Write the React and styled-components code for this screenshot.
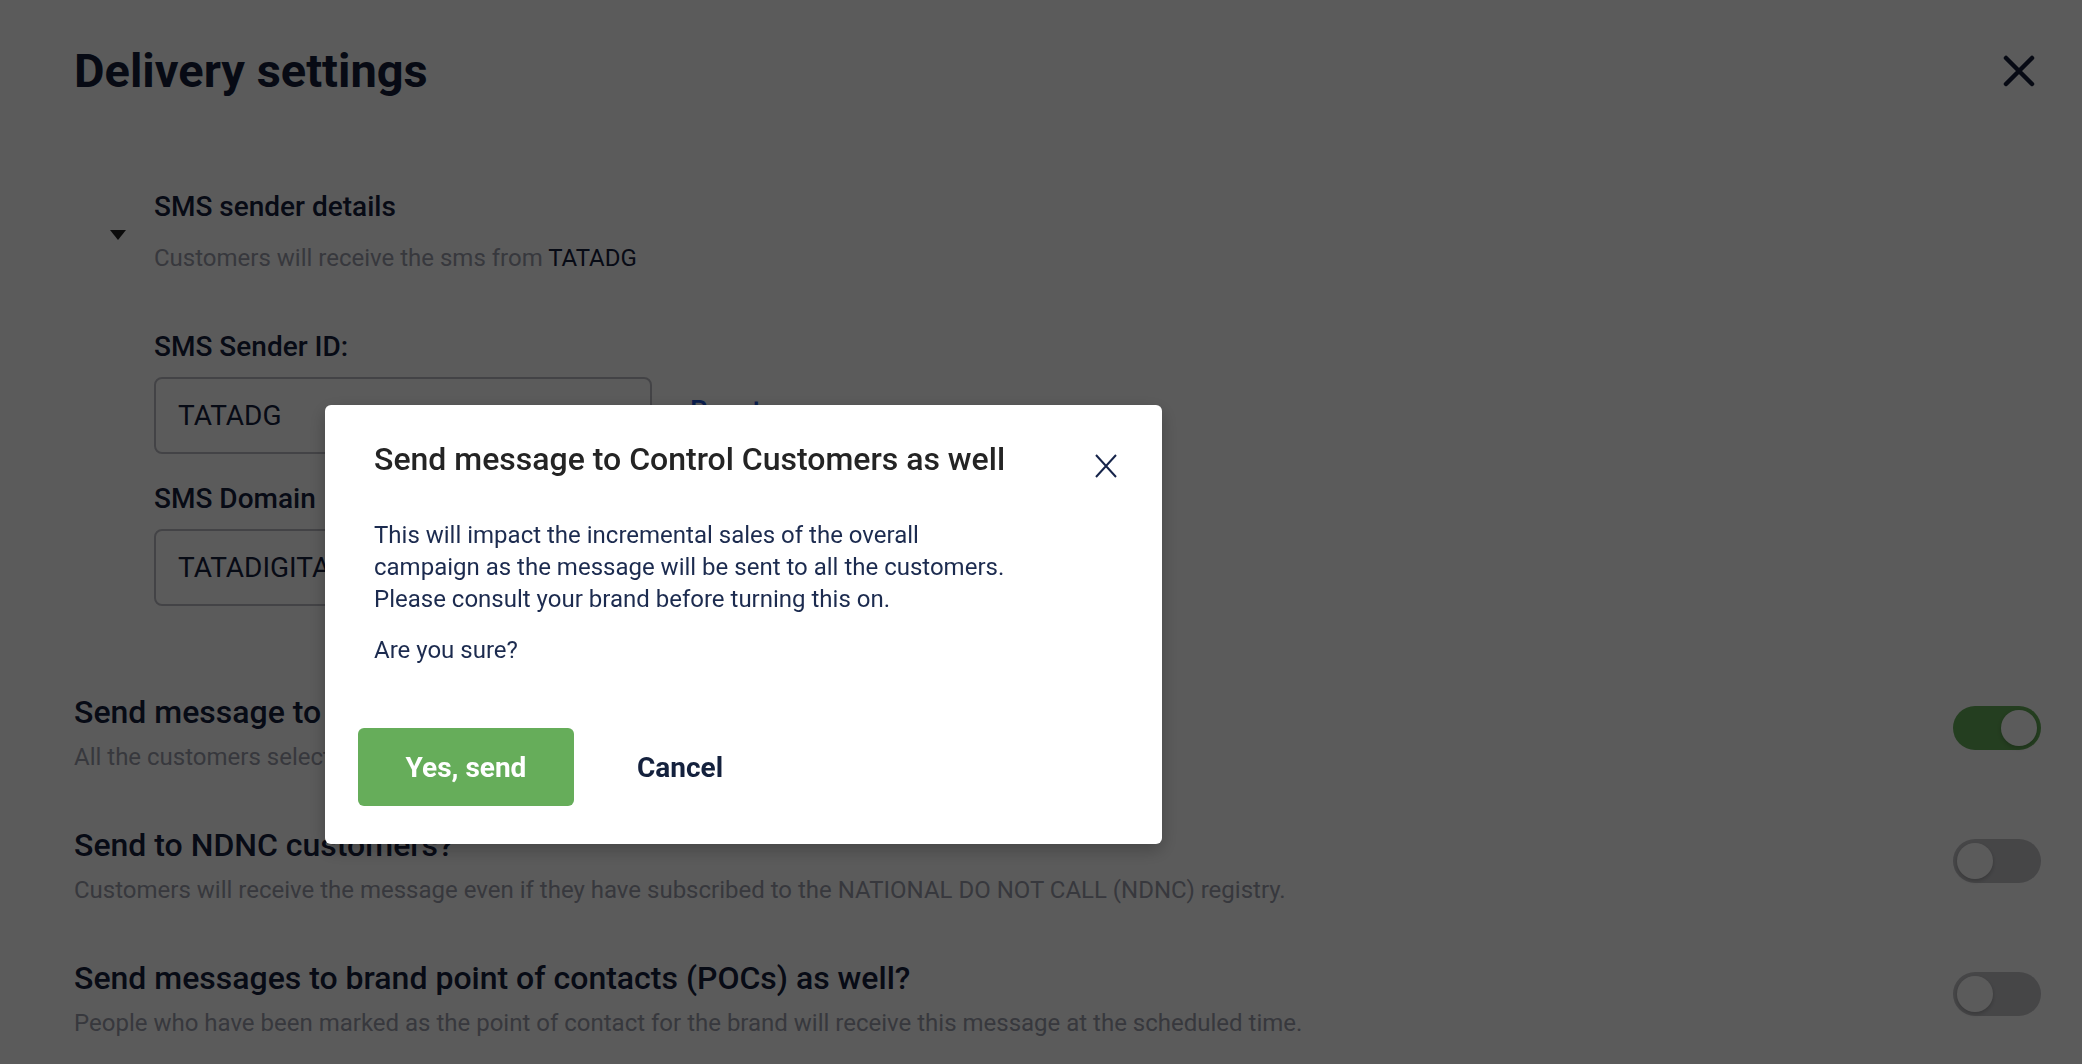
import React from "react";
import styled, { createGlobalStyle } from "styled-components";

const GlobalStyle = createGlobalStyle`
  html, body {
    margin: 0;
    padding: 0;
    background: #ffffff;
    font-family: Roboto, "Liberation Sans", Arial, sans-serif;
  }
  * { box-sizing: border-box; }
`;

const Page = styled.div`
  width: 2082px;
  min-height: 1064px;
  padding: 43px 41px 0 74px;
  background: #fff;
  color: #16203d;
`;

const Header = styled.div`
  display: flex;
  align-items: center;
  justify-content: space-between;
`;

const PageTitle = styled.h1`
  margin: 0;
  font-size: 47px;
  line-height: 56px;
  font-weight: 700;
  color: #141d38;
`;

const CloseButton = styled.button`
  width: 32px;
  height: 32px;
  margin-right: 6px;
  padding: 0;
  border: none;
  background: none;
  display: flex;
  align-items: center;
  justify-content: center;
  color: #141d38;
`;

const SenderSection = styled.div`
  display: flex;
  align-items: center;
  margin-top: 91px;
`;

const CaretCol = styled.div`
  width: 88px;
  display: flex;
  justify-content: center;
  padding-top: 7px;
  margin-right: -8px;
`;

const Caret = styled.span`
  width: 0;
  height: 0;
  border-left: 8px solid transparent;
  border-right: 8px solid transparent;
  border-top: 10px solid #222;
`;

const SectionTitle = styled.div`
  font-size: 28px;
  line-height: 34px;
  font-weight: 500;
  color: #16203d;
`;

const SubText = styled.div`
  margin-top: ${(p) => p.$gap || 0}px;
  font-size: 24px;
  line-height: 30px;
  color: #9b9dab;

  b {
    font-weight: 400;
    color: #16203d;
  }
`;

const Fields = styled.div`
  padding-left: 80px;
`;

const FieldLabel = styled.div`
  margin-top: ${(p) => p.$gap}px;
  font-size: 28px;
  line-height: 32px;
  font-weight: 500;
  color: #16203d;
`;

const FieldRow = styled.div`
  display: flex;
  align-items: flex-start;
  gap: 38px;
  margin-top: 14px;
`;

const Input = styled.div`
  width: 498px;
  height: 77px;
  border: 2px solid #bcbcc4;
  border-radius: 8px;
  padding-left: 22px;
  display: flex;
  align-items: center;
  font-size: 28px;
  color: #16203d;
`;

const ResetLink = styled.span`
  margin-top: 18px;
  font-size: 28px;
  line-height: 32px;
  font-weight: 500;
  color: #1f56d8;
`;

const Settings = styled.div`
  display: flex;
  flex-direction: column;
  gap: 53px;
  margin-top: 86px;
`;

const SettingRow = styled.div`
  display: flex;
  align-items: center;
  justify-content: space-between;
`;

const SettingTitle = styled.div`
  font-size: 32px;
  line-height: 40px;
  font-weight: 500;
  color: #16203d;
`;

const Toggle = styled.div`
  width: 88px;
  height: 44px;
  margin-bottom: 9px;
  border-radius: 22px;
  padding: 4px;
  display: flex;
  justify-content: ${(p) => (p.$on ? "flex-end" : "flex-start")};
  background: ${(p) => (p.$on ? "#66ad5a" : "#c4c4c8")};
`;

const Knob = styled.span`
  width: 36px;
  height: 36px;
  border-radius: 50%;
  background: #fff;
  box-shadow: 0 2px 4px rgba(0, 0, 0, 0.2);
`;

const Overlay = styled.div`
  position: fixed;
  inset: 0;
  background: rgba(0, 0, 0, 0.645);
  display: flex;
  align-items: flex-start;
  padding: 405px 0 0 325px;
`;

const Modal = styled.div`
  width: 837px;
  background: #fff;
  border-radius: 6px;
  box-shadow: 0 6px 18px rgba(0, 0, 0, 0.25);
  padding: 34px 45px 38px 49px;
`;

const ModalHeader = styled.div`
  display: flex;
  align-items: flex-start;
  justify-content: space-between;
`;

const ModalTitle = styled.h2`
  margin: 0;
  font-size: 32px;
  line-height: 40px;
  font-weight: 500;
  color: #242424;
`;

const ModalClose = styled.button`
  margin-top: 15px;
  width: 22px;
  height: 24px;
  padding: 0;
  border: none;
  background: none;
  color: #16244a;
`;

const ModalText = styled.p`
  margin: ${(p) => p.$top}px 0 0;
  font-size: 24px;
  line-height: 32px;
  color: #1c2b4f;
`;

const Footer = styled.div`
  display: flex;
  align-items: center;
  gap: 63px;
  margin: 62px 0 0 -16px;
`;

const PrimaryButton = styled.button`
  width: 216px;
  height: 78px;
  border: none;
  border-radius: 6px;
  background: #66ad5a;
  color: #fff;
  font-family: inherit;
  font-size: 28px;
  font-weight: 700;
`;

const TextButton = styled.button`
  padding: 0;
  border: none;
  background: none;
  color: #14213d;
  font-family: inherit;
  font-size: 28px;
  font-weight: 700;
`;

const settings = [
  {
    title: "Send message to Control Customers as well?",
    text: "All the customers selected in the control group will receive this message regardless of their status",
    on: true,
  },
  {
    title: "Send to NDNC customers?",
    text: "Customers will receive the message even if they have subscribed to the NATIONAL DO NOT CALL (NDNC) registry.",
    on: false,
  },
  {
    title: "Send messages to brand point of contacts (POCs) as well?",
    text: "People who have been marked as the point of contact for the brand will receive this message at the scheduled time.",
    on: false,
  },
];

export default function App() {
  return (
    <>
      <GlobalStyle />
      <Page>
        <Header>
          <PageTitle>Delivery settings</PageTitle>
          <CloseButton>
            <svg width="32" height="32" viewBox="0 0 32 32">
              <path d="M3 3 L29 29 M29 3 L3 29" stroke="currentColor" strokeWidth="4.5" strokeLinecap="round" />
            </svg>
          </CloseButton>
        </Header>

        <SenderSection>
          <CaretCol>
            <Caret />
          </CaretCol>
          <div>
            <SectionTitle>SMS sender details</SectionTitle>
            <SubText $gap={19}>
              Customers will receive the sms from <b>TATADG</b>
            </SubText>
          </div>
        </SenderSection>

        <Fields>
          <FieldLabel $gap={58}>SMS Sender ID:</FieldLabel>
          <FieldRow>
            <Input>TATADG</Input>
            <ResetLink>Reset</ResetLink>
          </FieldRow>
          <FieldLabel $gap={29}>SMS Domain</FieldLabel>
          <FieldRow>
            <Input>TATADIGITAL</Input>
          </FieldRow>
        </Fields>

        <Settings>
          {settings.map((s) => (
            <SettingRow key={s.title}>
              <div>
                <SettingTitle>{s.title}</SettingTitle>
                <SubText $gap={10}>{s.text}</SubText>
              </div>
              <Toggle $on={s.on}>
                <Knob />
              </Toggle>
            </SettingRow>
          ))}
        </Settings>
      </Page>

      <Overlay>
        <Modal>
          <ModalHeader>
            <ModalTitle>Send message to Control Customers as well</ModalTitle>
            <ModalClose>
              <svg width="22" height="24" viewBox="0 0 22 24">
                <path d="M1 1 L21 23 M21 1 L1 23" stroke="currentColor" strokeWidth="2" />
              </svg>
            </ModalClose>
          </ModalHeader>
          <ModalText $top={40}>
            This will impact the incremental sales of the overall
            <br />
            campaign as the message will be sent to all the customers.
            <br />
            Please consult your brand before turning this on.
          </ModalText>
          <ModalText $top={19}>Are you sure?</ModalText>
          <Footer>
            <PrimaryButton>Yes, send</PrimaryButton>
            <TextButton>Cancel</TextButton>
          </Footer>
        </Modal>
      </Overlay>
    </>
  );
}
